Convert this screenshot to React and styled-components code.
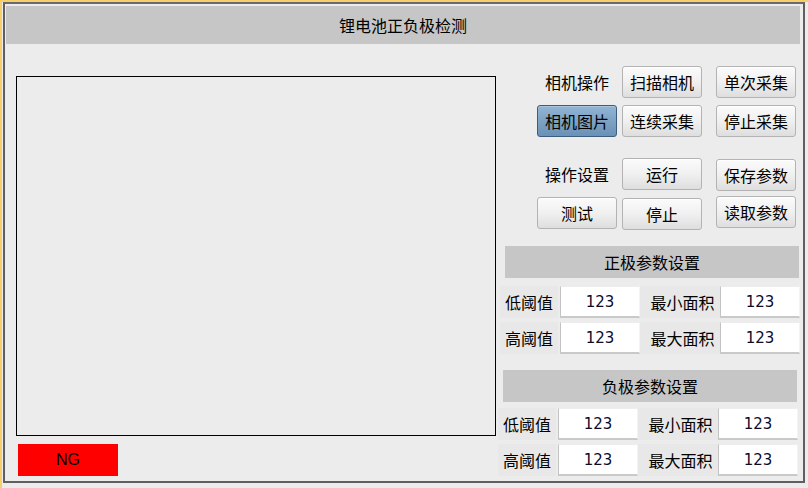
import React from "react";
import styled, { createGlobalStyle } from "styled-components";

const GlobalStyle = createGlobalStyle`
  html, body {
    margin: 0;
    padding: 0;
    background: #ececec;
  }
  body {
    font-family: "Noto Sans CJK SC", "Liberation Sans", sans-serif;
  }
`;

// 窗口外框（黄色边 + 深灰边框）
const Window = styled.div`
  width: 806px;
  height: 486px;
  border-top: 2px solid #f6cf6b;
  border-left: 2px solid #f6cf6b;
  background: #ececec;
  overflow: hidden;
`;

const Frame = styled.div`
  margin-left: 1px;
  width: 798px;
  height: 477px;
  border: 2px solid #5f5f5f;
  border-top-color: #6a6a6a;
  background: #ececec;
  display: flex;
  flex-direction: column;
  overflow: hidden;
`;

const TitleBar = styled.div`
  flex-shrink: 0;
  margin: 2px 3px 0 1px;
  height: 38px;
  background: #c6c6c6;
  display: flex;
  align-items: center;
  justify-content: center;
  font-size: 16px;
  color: #000;
`;

const Body = styled.div`
  display: flex;
  align-items: flex-start;
`;

const LeftCol = styled.div`
  margin-left: 11px;
  margin-top: 32px;
  display: flex;
  flex-direction: column;
`;

const ImageBox = styled.div`
  width: 478px;
  height: 358px;
  border: 1px solid #000;
  background: #ececec;
`;

const Result = styled.div`
  margin: 8px 0 0 2px;
  width: 100px;
  height: 32px;
  background: ${(p) => (p.ok ? "#00c000" : "#ff0000")};
  display: flex;
  align-items: center;
  justify-content: center;
  font-family: "Liberation Sans", sans-serif;
  font-size: 16px;
  color: #000;
`;

const RightCol = styled.div`
  margin-left: 4px;
  width: 300px;
  display: flex;
  flex-direction: column;
`;

const ButtonGrid = styled.div`
  margin: 22px 0 0 37px;
  display: grid;
  grid-template-columns: 80px 80px 89px;
  grid-template-rows: 32px 32px 7px 32px 32px;
  column-gap: 5px;
  row-gap: 7px;
`;

const Spacer = styled.div`
  grid-column: 1 / -1;
`;

const Label = styled.div`
  display: flex;
  align-items: center;
  justify-content: center;
  font-size: 16px;
  color: #000;
`;

const Button = styled.button`
  width: 80px;
  height: 32px;
  justify-self: ${(p) => (p.end ? "end" : "start")};
  margin-top: ${(p) => p.nudge || 0}px;
  padding: 0;
  font-family: "Noto Sans CJK SC", sans-serif;
  font-size: 16px;
  color: #000;
  border: 1px solid ${(p) => (p.active ? "#3d5d7e" : "#b3b3b3")};
  border-radius: 3px;
  background: ${(p) =>
    p.active
      ? "linear-gradient(#93b5d4, #7da2c4 50%, #6a91b6)"
      : "linear-gradient(#fbfbfb, #f0f0f0 50%, #dedede)"};
  box-shadow: inset 0 1px 0 ${(p) => (p.active ? "#a9c6e0" : "#ffffff")};
`;

const SectionHeader = styled.div`
  flex-shrink: 0;
  margin: ${(p) => p.top}px 0 0 ${(p) => 5 + p.shift}px;
  width: 294px;
  height: 32px;
  background: #c6c6c6;
  display: flex;
  align-items: center;
  justify-content: center;
  font-size: 16px;
  color: #000;
`;

const ParamGrid = styled.div`
  margin: ${(p) => p.gap}px 0 0 ${(p) => p.shift}px;
  display: grid;
  grid-template-columns: 60px 80px 80px 80px;
  grid-auto-rows: 32px;
  row-gap: 4px;
`;

const ParamLabel = styled.div`
  display: flex;
  align-items: center;
  justify-content: center;
  font-size: 16px;
  color: #000;
  background: #e8e8e8;
  margin-right: ${(p) => (p.wide ? 0 : 2)}px;
  padding-left: ${(p) => (p.wide ? 5 : 0)}px;
`;

const ValueBox = styled.div`
  box-sizing: border-box;
  width: 80px;
  height: 32px;
  background: #fff;
  border-style: solid;
  border-width: 1px 1px 2px 1px;
  border-color: #ededed #f4f4f4 #c9c9c9 #c3c3c3;
  display: flex;
  align-items: center;
  justify-content: center;
  font-family: "DejaVu Sans", sans-serif;
  font-size: 15px;
  color: #0c0c2a;
`;

function ParamSection({ title, top, gap, shift, values }) {
  return (
    <>
      <SectionHeader top={top} shift={shift}>{title}</SectionHeader>
      <ParamGrid gap={gap} shift={shift}>
        <ParamLabel>低阈值</ParamLabel>
        <ValueBox>{values.low}</ValueBox>
        <ParamLabel wide>最小面积</ParamLabel>
        <ValueBox>{values.minArea}</ValueBox>
        <ParamLabel>高阈值</ParamLabel>
        <ValueBox>{values.high}</ValueBox>
        <ParamLabel wide>最大面积</ParamLabel>
        <ValueBox>{values.maxArea}</ValueBox>
      </ParamGrid>
    </>
  );
}

export default function App() {
  const positive = { low: 123, high: 123, minArea: 123, maxArea: 123 };
  const negative = { low: 123, high: 123, minArea: 123, maxArea: 123 };

  return (
    <Window>
      <GlobalStyle />
      <Frame>
        <TitleBar>锂电池正负极检测</TitleBar>
        <Body>
          <LeftCol>
            <ImageBox />
            <Result>NG</Result>
          </LeftCol>
          <RightCol>
            <ButtonGrid>
              <Label>相机操作</Label>
              <Button>扫描相机</Button>
              <Button end>单次采集</Button>
              <Button active>相机图片</Button>
              <Button>连续采集</Button>
              <Button end>停止采集</Button>
              <Spacer />
              <Label>操作设置</Label>
              <Button>运行</Button>
              <Button end nudge={1}>保存参数</Button>
              <Button>测试</Button>
              <Button nudge={1}>停止</Button>
              <Button end nudge={-1}>读取参数</Button>
            </ButtonGrid>
            <ParamSection title="正极参数设置" top={17} gap={8} shift={0} values={positive} />
            <ParamSection title="负极参数设置" top={16} gap={6} shift={-2} values={negative} />
          </RightCol>
        </Body>
      </Frame>
    </Window>
  );
}
